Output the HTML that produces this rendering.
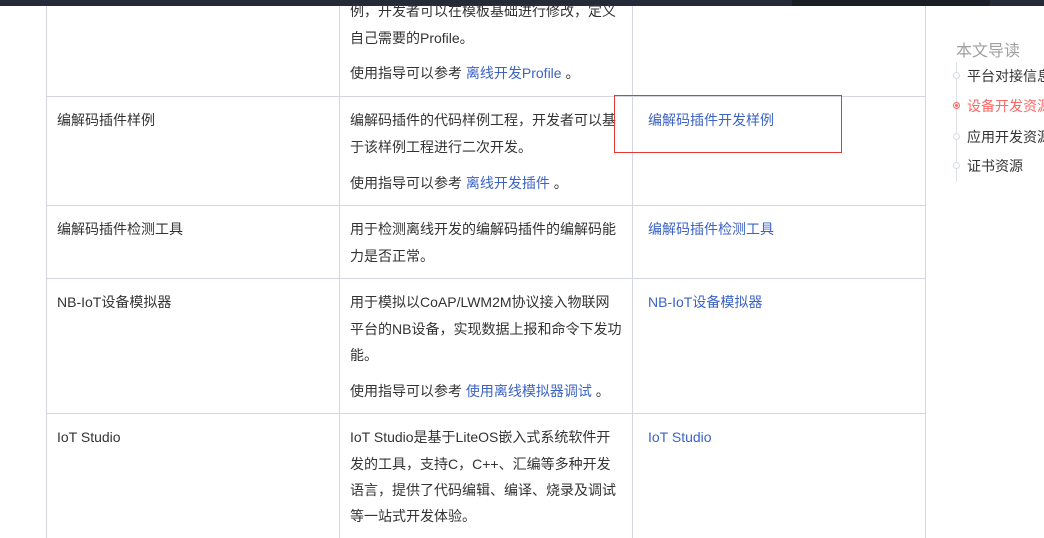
<!DOCTYPE html>
<html><head><meta charset="utf-8"><style>
*{margin:0;padding:0;box-sizing:border-box}
body{width:1044px;height:538px;overflow:hidden;background:#fff;position:relative;font-family:"Liberation Sans","Noto Sans CJK SC",sans-serif;font-size:14px;color:#333}
.t{position:absolute;white-space:nowrap;line-height:16px}
a{color:#3c63c4;text-decoration:none}
.v{position:absolute;top:6px;bottom:0;width:1px;background:#d3d6de}
.h{position:absolute;left:46px;width:880px;height:1px;background:#d3d6de}
.nav{position:absolute;left:967px;white-space:nowrap;font-size:14px;color:#333;line-height:16px}
.dot{position:absolute;left:953px;width:7px;height:7px;border-radius:50%;border:1px solid #d8dbe6;background:#fff}
</style></head><body>
<div style="position:absolute;left:0;top:0;width:1044px;height:6px;background:#252a38"></div>
<div style="position:absolute;left:792px;top:0;width:198px;height:6px;background:#1b1e25"></div>
<div class="v" style="left:46px"></div>
<div class="v" style="left:339px"></div>
<div class="v" style="left:632px"></div>
<div class="v" style="left:925px"></div>
<div class="h" style="top:96px"></div>
<div class="h" style="top:205px"></div>
<div class="h" style="top:278px"></div>
<div class="h" style="top:413px"></div>

<div class="t" style="left:350px;top:3px">例，开发者可以在模板基础进行修改，定义</div>
<div class="t" style="left:350px;top:30px">自己需要的Profile。</div>
<div class="t" style="left:350px;top:65px">使用指导可以参考 <a>离线开发Profile</a> 。</div>

<div class="t" style="left:57px;top:112px">编解码插件样例</div>
<div class="t" style="left:350px;top:112px">编解码插件的代码样例工程，开发者可以基</div>
<div class="t" style="left:350px;top:139px">于该样例工程进行二次开发。</div>
<div class="t" style="left:350px;top:175px">使用指导可以参考 <a>离线开发插件</a> 。</div>
<div class="t" style="left:648px;top:112px"><a>编解码插件开发样例</a></div>
<div style="position:absolute;left:614px;top:95px;width:228px;height:58px;border:1px solid #e53935"></div>

<div class="t" style="left:57px;top:221px">编解码插件检测工具</div>
<div class="t" style="left:350px;top:221px">用于检测离线开发的编解码插件的编解码能</div>
<div class="t" style="left:350px;top:248px">力是否正常。</div>
<div class="t" style="left:648px;top:221px"><a>编解码插件检测工具</a></div>

<div class="t" style="left:57px;top:294px">NB-IoT设备模拟器</div>
<div class="t" style="left:350px;top:294px">用于模拟以CoAP/LWM2M协议接入物联网</div>
<div class="t" style="left:350px;top:321px">平台的NB设备，实现数据上报和命令下发功</div>
<div class="t" style="left:350px;top:347px">能。</div>
<div class="t" style="left:350px;top:383px">使用指导可以参考 <a>使用离线模拟器调试</a> 。</div>
<div class="t" style="left:648px;top:294px"><a>NB-IoT设备模拟器</a></div>

<div class="t" style="left:57px;top:429px">IoT Studio</div>
<div class="t" style="left:350px;top:429px">IoT Studio是基于LiteOS嵌入式系统软件开</div>
<div class="t" style="left:350px;top:456px">发的工具，支持C，C++、汇编等多种开发</div>
<div class="t" style="left:350px;top:482px">语言，提供了代码编辑、编译、烧录及调试</div>
<div class="t" style="left:350px;top:508px">等一站式开发体验。</div>
<div class="t" style="left:648px;top:429px"><a>IoT Studio</a></div>

<div style="position:absolute;left:956px;top:37px;font-size:16px;color:#a0a0a0;white-space:nowrap">本文导读</div>
<div style="position:absolute;left:956px;top:62px;width:1px;height:120px;background:#dfe1e8"></div>
<div class="dot" style="top:72px"></div>
<div class="dot" style="top:102px;border-color:#f66;box-shadow:inset 0 0 0 1px #fff,inset 0 0 0 3px #f66"></div>
<div class="dot" style="top:133px"></div>
<div class="dot" style="top:162px"></div>
<div class="nav" style="top:68px">平台对接信息</div>
<div class="nav" style="top:98px;color:#f66">设备开发资源</div>
<div class="nav" style="top:129px">应用开发资源</div>
<div class="nav" style="top:158px">证书资源</div>
</body></html>
